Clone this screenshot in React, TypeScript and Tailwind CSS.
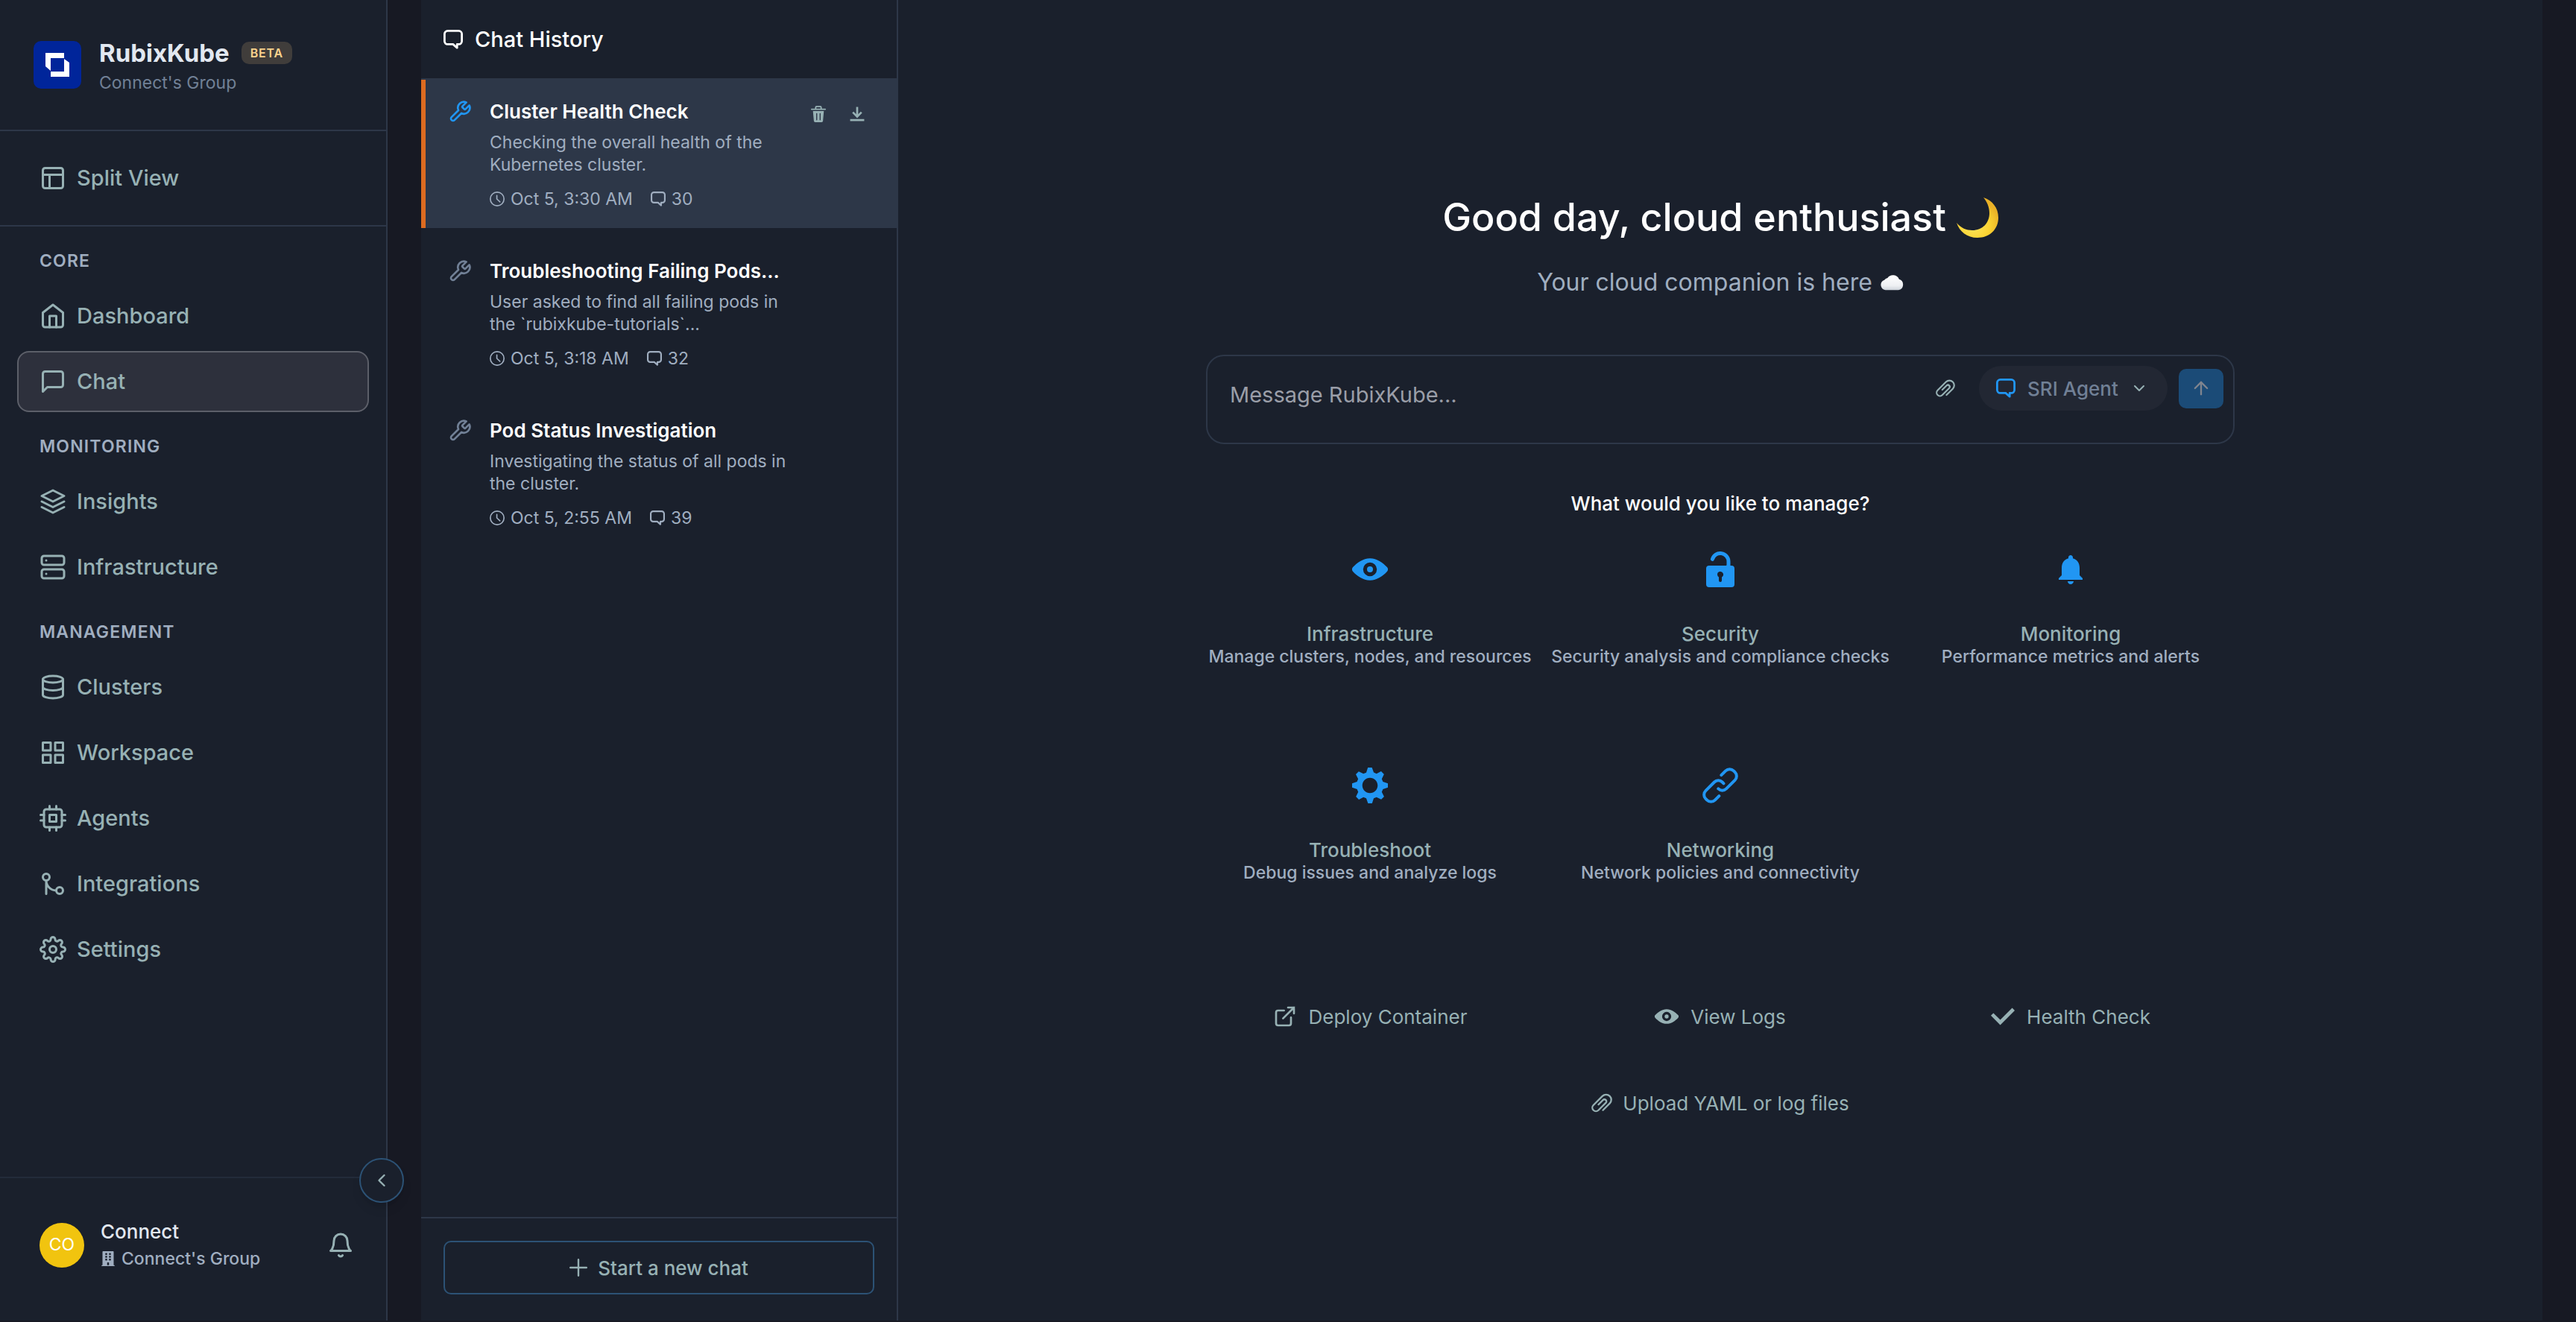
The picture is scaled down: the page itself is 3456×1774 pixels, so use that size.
import React from "react";
import {
  FiLayout,
  FiHome,
  FiMessageSquare,
  FiLayers,
  FiServer,
  FiDatabase,
  FiGrid,
  FiCpu,
  FiGitMerge,
  FiSettings,
  FiBell,
  FiTool,
  FiChevronLeft,
  FiChevronDown,
  FiArrowUp,
} from "react-icons/fi";
import { FaBuilding } from "react-icons/fa";

type IconType = React.ComponentType<{ className?: string }>;
type IconProps = { className?: string };

function fillIcon(size: number, ...paths: string[]): IconType {
  return function Glyph({ className }: IconProps) {
    return (
      <svg viewBox={`0 0 ${size} ${size}`} className={className} fill="currentColor" aria-hidden="true">
        {paths.map((d) => (
          <path key={d} d={d} fillRule="evenodd" />
        ))}
      </svg>
    );
  };
}

const ViewIcon = fillIcon(
  24,
  "M23.432,10.524C20.787,7.614,16.4,4.538,12,4.6,7.6,4.537,3.213,7.615.568,10.524a2.211,2.211,0,0,0,0,2.948C3.182,16.351,7.507,19.4,11.839,19.4h.308c4.347,0,8.671-3.049,11.288-5.929A2.21,2.21,0,0,0,23.432,10.524ZM7.4,12A4.6,4.6,0,1,1,12,16.6,4.6,4.6,0,0,1,7.4,12Z",
  "M14,12a2,2,0,1,1,-4,0a2,2,0,1,1,4,0Z",
);
const UnlockIcon = fillIcon(
  24,
  "M19.5,9.5h-.75V6.75A6.75,6.75,0,0,0,5.533,4.811a1.25,1.25,0,1,0,2.395.717A4.25,4.25,0,0,1,16.25,6.75V9a.5.5,0,0,1-.5.5H4.5a2,2,0,0,0-2,2V22a2,2,0,0,0,2,2h15a2,2,0,0,0,2-2V11.5A2,2,0,0,0,19.5,9.5Zm-9.5,6a2,2,0,1,1,3,1.723V19.5a1,1,0,0,1-2,0V17.223A1.994,1.994,0,0,1,10,15.5Z",
);
const BellSolidIcon = fillIcon(
  24,
  "M12 22c1.1 0 2-.9 2-2h-4c0 1.1.89 2 2 2zm6-6v-5c0-3.07-1.64-5.64-4.5-6.32V4c0-.83-.67-1.5-1.5-1.5s-1.5.67-1.5 1.5v.68C7.63 5.36 6 7.92 6 11v5l-2 2v1h16v-1l-2-2z",
);
const GearIcon = fillIcon(
  14,
  "M14,7.77 L14,6.17 L12.06,5.53 L11.61,4.44 L12.49,2.6 L11.36,1.47 L9.55,2.38 L8.46,1.93 L7.77,0 L6.17,0 L5.54,1.94 L4.43,2.39 L2.59,1.51 L1.46,2.64 L2.37,4.45 L1.92,5.54 L0,6.23 L0,7.82 L1.94,8.46 L2.39,9.55 L1.51,11.39 L2.64,12.52 L4.45,11.61 L5.54,12.06 L6.23,14 L7.82,14 L8.46,12.06 L9.55,11.61 L11.39,12.49 L12.52,11.36 L11.61,9.55 L12.08,8.46 L14,7.77 Z M7,10 C5.34,10 4,8.66 4,7 C4,5.34 5.34,4 7,4 C8.66,4 10,5.34 10,7 C10,8.66 8.66,10 7,10 Z",
);
const LinkIcon = fillIcon(
  24,
  "M10.458,18.374,7.721,21.11a2.853,2.853,0,0,1-3.942,0l-.892-.891a2.787,2.787,0,0,1,0-3.941l5.8-5.8a2.789,2.789,0,0,1,3.942,0l.893.892A1,1,0,0,0,14.94,9.952l-.893-.892a4.791,4.791,0,0,0-6.771,0l-5.8,5.8a4.787,4.787,0,0,0,0,6.77l.892.891a4.785,4.785,0,0,0,6.771,0l2.736-2.735a1,1,0,1,0-1.414-1.415Z",
  "M22.526,2.363l-.892-.892a4.8,4.8,0,0,0-6.77,0l-2.905,2.9a1,1,0,0,0,1.414,1.414l2.9-2.9a2.79,2.79,0,0,1,3.941,0l.893.893a2.786,2.786,0,0,1,0,3.942l-5.8,5.8a2.769,2.769,0,0,1-1.971.817h0a2.766,2.766,0,0,1-1.969-.816,1,1,0,1,0-1.415,1.412,4.751,4.751,0,0,0,3.384,1.4h0a4.752,4.752,0,0,0,3.385-1.4l5.8-5.8a4.786,4.786,0,0,0,0-6.77Z",
);
const CheckIcon = fillIcon(
  14,
  "M5.5 12L14 3.5L12.5 2L5.5 9L1.5 5L0 6.5Z",
);
const AttachmentIcon = fillIcon(
  24,
  "M21.843,3.455a6.961,6.961,0,0,0-9.846,0L1.619,13.832a5.128,5.128,0,0,0,7.252,7.252L17.3,12.653A3.293,3.293,0,1,0,12.646,8L7.457,13.184A1,1,0,1,0,8.871,14.6L14.06,9.409a1.294,1.294,0,0,1,1.829,1.83L7.457,19.67a3.128,3.128,0,0,1-4.424-4.424L13.411,4.869a4.962,4.962,0,1,1,7.018,7.018L12.646,19.67a1,1,0,1,0,1.414,1.414L21.843,13.3a6.96,6.96,0,0,0,0-9.846Z",
);
const TimeIcon = fillIcon(
  24,
  "M12,0A12,12,0,1,0,24,12,12.014,12.014,0,0,0,12,0Zm0,22A10,10,0,1,1,22,12,10.011,10.011,0,0,1,12,22Z",
  "M17.134,15.81,12.5,11.561V6.5a1,1,0,0,0-2,0V12a1,1,0,0,0,.324.738l4.959,4.545a1.01,1.01,0,0,0,1.413-.061A1,1,0,0,0,17.134,15.81Z",
);
const DeleteIcon = fillIcon(
  24,
  "M19.452 7.5H4.547a.5.5 0 00-.5.545l1.287 14.136A2 2 0 007.326 24h9.347a2 2 0 001.992-1.819L19.95 8.045a.5.5 0 00-.129-.382.5.5 0 00-.369-.163zm-9.2 13a.75.75 0 01-1.5 0v-9a.75.75 0 011.5 0zm5 0a.75.75 0 01-1.5 0v-9a.75.75 0 011.5 0zM22 4h-4.75a.25.25 0 01-.25-.25V2.5A2.5 2.5 0 0014.5 0h-5A2.5 2.5 0 007 2.5v1.25a.25.25 0 01-.25.25H2a1 1 0 000 2h20a1 1 0 000-2zM9 3.75V2.5a.5.5 0 01.5-.5h5a.5.5 0 01.5.5v1.25a.25.25 0 01-.25.25h-5.5A.25.25 0 019 3.75z",
);
const DownloadIcon = fillIcon(
  14,
  "M11.2857,6.05714 L10.08571,4.85714 L7.85714,7.14786 L7.85714,1 L6.14286,1 L6.14286,7.14786 L3.91429,4.85714 L2.71429,6.05714 L7,10.42857 L11.2857,6.05714 Z M1,11.2857 L1,13 L13,13 L13,11.2857 L1,11.2857 Z",
);

function ExternalLinkIcon({ className }: IconProps) {
  return (
    <svg viewBox="0 0 24 24" className={className} fill="none" stroke="currentColor" strokeWidth="2" strokeLinecap="round" aria-hidden="true">
      <path d="M18 13v6a2 2 0 0 1-2 2H5a2 2 0 0 1-2-2V8a2 2 0 0 1 2-2h6M15 3h6v6M10 14L21 3" />
    </svg>
  );
}

function ChatIcon({ className }: IconProps) {
  return (
    <svg viewBox="0 0 26 26" className={className} fill="none" stroke="currentColor" strokeWidth="2.8" strokeLinejoin="round" aria-hidden="true">
      <path d="M5.6 1.4h14.8a4.2 4.2 0 0 1 4.2 4.2v9.6a4.2 4.2 0 0 1-4.2 4.2h-2.2v4.8l-5.4-4.8H5.6a4.2 4.2 0 0 1-4.2-4.2V5.6a4.2 4.2 0 0 1 4.2-4.2Z" />
    </svg>
  );
}

function PlusIcon({ className }: IconProps) {
  return (
    <svg viewBox="0 0 24 24" className={className} fill="none" stroke="currentColor" strokeWidth="2.4" strokeLinecap="round" aria-hidden="true">
      <path d="M12 1.2v21.6M1.2 12h21.6" />
    </svg>
  );
}

function Logo() {
  return (
    <svg viewBox="0 0 64 64" className="size-16 shrink-0" role="img" aria-label="RubixKube logo">
      <rect width="64" height="64" rx="10" fill="#00259a" />
      <path fill="#fff" d="M16 16H41V23H23V40L16 34Z" />
      <path fill="#fff" d="M41 24L48 29V48H23V41H41Z" />
    </svg>
  );
}

function Moon() {
  return (
    <svg viewBox="0 0 56 56" className="size-14 shrink-0" role="img" aria-label="crescent moon">
      <defs>
        <radialGradient id="moonFill" cx="40%" cy="70%" r="65%">
          <stop offset="0" stopColor="#ffe65c" />
          <stop offset="0.6" stopColor="#fbd332" />
          <stop offset="1" stopColor="#eab127" />
        </radialGradient>
      </defs>
      <path d="M36 1C48 5 56 15 56 28C56 44 44 55 28 55C14 55 4 47 0 35C6 42 13 45 21 45C35 45 44 35 44 22C44 14 41 7 36 1Z" fill="url(#moonFill)" />
    </svg>
  );
}

function Cloud() {
  return (
    <svg viewBox="0 0 34 24" className="h-6 w-8 shrink-0" role="img" aria-label="cloud">
      <defs>
        <linearGradient id="cloudFill" x1="0" y1="0" x2="0" y2="1">
          <stop offset="0" stopColor="#ffffff" />
          <stop offset="0.7" stopColor="#eef0f3" />
          <stop offset="1" stopColor="#cdd3da" />
        </linearGradient>
      </defs>
      <path d="M8 23A7.500 7.500 0 0 1 6.500 8.500A7 7 0 0 1 11 5.500A9.500 9.500 0 0 1 27.500 7.500A8 8 0 0 1 26.500 23Z" fill="url(#cloudFill)" />
    </svg>
  );
}

const sections: { label: string; items: { label: string; icon: IconType; active?: boolean }[] }[] = [
  {
    label: "CORE",
    items: [
      { label: "Dashboard", icon: FiHome },
      { label: "Chat", icon: FiMessageSquare, active: true },
    ],
  },
  {
    label: "MONITORING",
    items: [
      { label: "Insights", icon: FiLayers },
      { label: "Infrastructure", icon: FiServer },
    ],
  },
  {
    label: "MANAGEMENT",
    items: [
      { label: "Clusters", icon: FiDatabase },
      { label: "Workspace", icon: FiGrid },
      { label: "Agents", icon: FiCpu },
      { label: "Integrations", icon: FiGitMerge },
      { label: "Settings", icon: FiSettings },
    ],
  },
];

const chats = [
  {
    title: "Cluster Health Check",
    lines: ["Checking the overall health of the", "Kubernetes cluster."],
    time: "Oct 5, 3:30 AM",
    count: 30,
    active: true,
  },
  {
    title: "Troubleshooting Failing Pods...",
    lines: ["User asked to find all failing pods in", "the `rubixkube-tutorials`..."],
    time: "Oct 5, 3:18 AM",
    count: 32,
    active: false,
  },
  {
    title: "Pod Status Investigation",
    lines: ["Investigating the status of all pods in", "the cluster."],
    time: "Oct 5, 2:55 AM",
    count: 39,
    active: false,
  },
];

const topics = [
  { label: "Infrastructure", detail: "Manage clusters, nodes, and resources", icon: ViewIcon },
  { label: "Security", detail: "Security analysis and compliance checks", icon: UnlockIcon },
  { label: "Monitoring", detail: "Performance metrics and alerts", icon: BellSolidIcon },
  { label: "Troubleshoot", detail: "Debug issues and analyze logs", icon: GearIcon },
  { label: "Networking", detail: "Network policies and connectivity", icon: LinkIcon },
];

const actions = [
  { label: "Deploy Container", icon: ExternalLinkIcon },
  { label: "View Logs", icon: ViewIcon },
  { label: "Health Check", icon: CheckIcon },
];

function NavItem({ label, icon: Icon, active = false }: { label: string; icon: IconType; active?: boolean }) {
  return (
    <a
      href="#"
      aria-current={active ? "page" : undefined}
      className={
        active
          ? "flex h-[82px] items-center gap-3.5 rounded-2xl border-2 border-[#5c5f69] bg-[#2d303c] px-7"
          : "flex h-[82px] items-center gap-3.5 rounded-2xl border-2 border-transparent px-7"
      }
    >
      <Icon className="size-9" />
      <span className="text-[29px] leading-10 font-medium">{label}</span>
    </a>
  );
}

function Sidebar() {
  return (
    <aside className="relative flex w-[520px] shrink-0 flex-col border-r-2 border-[#2d3748] bg-[#1a202c] text-[#97b1b4]">
      <div className="flex h-[176px] items-center gap-6 border-b-2 border-[#2d3748] px-[45px]">
        <Logo />
        <div className="pt-2">
          <div className="flex items-center gap-4">
            <span className="text-[33px] leading-10 font-bold text-[#e2e8f0]">RubixKube</span>
            <span className="rounded-[10px] bg-[#403d3b] px-3 text-base leading-[30px] font-semibold tracking-wider text-[#fbd38d]">
              BETA
            </span>
          </div>
          <p className="text-[23px] leading-10 text-[#718096]">Connect's Group</p>
        </div>
      </div>
      <div className="flex h-32 flex-col justify-center border-b-2 border-[#2d3748] px-[23px]">
        <NavItem label="Split View" icon={FiLayout} />
      </div>
      <nav className="flex-1 px-[23px]" aria-label="Main">
        {sections.map((section) => (
          <div key={section.label}>
            <h2 className="px-[30px] pt-[31px] pb-[18px] text-[23px] leading-[30px] font-semibold tracking-wider text-[#a0aec0]">
              {section.label}
            </h2>
            <div className="flex flex-col gap-1.5">
              {section.items.map((item) => (
                <NavItem key={item.label} {...item} />
              ))}
            </div>
          </div>
        ))}
      </nav>
      <div className="flex h-[193px] items-center gap-[22px] border-t-2 border-[#232b3a] px-[43px] pb-3">
        <span className="ml-2.5 flex size-[60px] shrink-0 items-center justify-center rounded-full bg-[#f1c40f] text-[23px] text-white">
          CO
        </span>
        <div className="flex-1">
          <p className="text-[26px] leading-9 font-medium text-[#e2e8f0]">Connect</p>
          <p className="flex items-center gap-2 text-[23px] leading-9 font-medium text-[#a0aec0]">
            <FaBuilding className="size-5" />
            Connect's Group
          </p>
        </div>
        <button type="button" aria-label="Notifications">
          <FiBell className="size-9" />
        </button>
      </div>
      <button
        type="button"
        aria-label="Collapse sidebar"
        className="absolute -right-6 bottom-[158px] flex size-[60px] items-center justify-center rounded-full border-2 border-[#2c5275] bg-[#1a202c] shadow-lg"
      >
        <FiChevronLeft className="size-7" />
      </button>
    </aside>
  );
}

function ChatHistory() {
  return (
    <section className="flex w-[640px] shrink-0 flex-col border-r-2 border-[#2d3748]" aria-label="Chat History">
      <header className="flex h-[107px] items-center gap-4 border-b-2 border-[#2d3748] px-[30px] text-white">
        <ChatIcon className="size-[26px]" />
        <h1 className="text-[29px] leading-10 font-medium">Chat History</h1>
      </header>
      <ul className="flex flex-1 flex-col gap-[15px]">
        {chats.map((chat) => (
          <li
            key={chat.title}
            className={
              chat.active
                ? "flex gap-6 border-l-[6px] border-[#dd6b20] bg-[#2d3748] pt-[25px] pr-[42px] pb-[23px] pl-[30px]"
                : "flex gap-6 border-l-[6px] border-transparent pt-[25px] pr-[42px] pb-[23px] pl-[30px]"
            }
          >
            <FiTool className={chat.active ? "mt-0.5 size-8 text-[#2196f3]" : "mt-0.5 size-8 text-[#718096]"} />
            <div className="flex-1">
              <h2 className="text-[26px] leading-9 font-semibold text-white">{chat.title}</h2>
              <p className="pt-2 text-[23px] leading-[30px] text-[#a0aec0]">
                {chat.lines.map((line) => (
                  <span key={line} className="block whitespace-nowrap">
                    {line}
                  </span>
                ))}
              </p>
              <div className="flex items-center gap-6 pt-[15px] text-[23px] leading-8 text-[#a0aec0]">
                <span className="flex items-center gap-2">
                  <TimeIcon className="size-5" />
                  {chat.time}
                </span>
                <span className="flex items-center gap-2">
                  <ChatIcon className="size-5" />
                  {chat.count}
                </span>
              </div>
            </div>
            {chat.active && (
              <div className="flex items-start gap-[30px] pt-2.5 text-[#97b1b4]">
                <button type="button" aria-label="Delete chat">
                  <DeleteIcon className="size-[22px]" />
                </button>
                <button type="button" aria-label="Download chat">
                  <DownloadIcon className="size-[22px]" />
                </button>
              </div>
            )}
          </li>
        ))}
      </ul>
      <footer className="h-[139px] border-t-2 border-[#2d3748] px-[30px] pt-[30px]">
        <button
          type="button"
          className="flex h-[72px] w-full items-center justify-center gap-3.5 rounded-[10px] border-2 border-[#2c5275] text-[26px] font-medium text-[#97b1b4]"
        >
          <PlusIcon className="size-6" />
          Start a new chat
        </button>
      </footer>
    </section>
  );
}

function Composer() {
  return (
    <form className="flex h-[120px] w-full rounded-3xl border-2 border-[#2d3748] py-[13px] pr-[13px] pl-[30px]">
      <textarea
        aria-label="Message"
        placeholder="Message RubixKube..."
        className="h-full flex-1 resize-none bg-transparent pt-[18px] text-[29px] leading-[42px] outline-none placeholder:text-[#9a9ea8]"
      />
      <div className="flex h-[60px] items-center text-[#97b1b4]">
        <button type="button" aria-label="Attach file" className="mr-8">
          <AttachmentIcon className="size-[26px]" />
        </button>
        <label className="mr-[15px] flex h-[60px] items-center gap-4 rounded-full bg-[#222733] pr-[26px] pl-[23px]">
          <ChatIcon className="size-[26px] text-[#2196f3]" />
          <select aria-label="Agent" className="appearance-none bg-transparent text-[26px] font-medium text-[#718096]">
            <option>SRI Agent</option>
          </select>
          <FiChevronDown className="size-6" />
        </label>
        <button
          type="submit"
          aria-label="Send"
          className="flex h-[53px] w-[60px] items-center justify-center rounded-[10px] bg-[#1b4b77] text-[#80858f]"
        >
          <FiArrowUp className="size-7" />
        </button>
      </div>
    </form>
  );
}

function Welcome() {
  return (
    <main className="flex min-w-0 flex-1 flex-col items-center px-8 pt-[260px]">
      <div className="flex w-full max-w-[1380px] flex-col items-center">
        <h2 className="flex items-center gap-3.5 text-[52px] leading-[64px] font-medium text-white">
          Good day, cloud enthusiast
          <Moon />
        </h2>
        <p className="flex items-center gap-2.5 pt-[31px] text-[32px] leading-[48px] text-[#a0aec0]">
          Your cloud companion is here
          <Cloud />
        </p>
        <div className="w-full pt-[73px]">
          <Composer />
        </div>
        <h3 className="pt-[60px] text-[26px] leading-10 font-medium text-white">What would you like to manage?</h3>
        <div className="grid w-full grid-cols-3 gap-[30px] pt-4">
          {topics.map(({ label, detail, icon: Icon }) => (
            <button
              key={label}
              type="button"
              className="flex h-[260px] min-w-0 flex-col items-center pt-7 leading-[30px] whitespace-nowrap"
            >
              <Icon className="size-12 text-[#2196f3]" />
              <span className="pt-12 text-[26px] font-medium text-[#97b1b4]">{label}</span>
              <span className="text-[23px] font-medium text-[#a0aec0]">{detail}</span>
            </button>
          ))}
        </div>
        <div className="grid w-full grid-cols-3 gap-[30px] pt-[62px] text-[26px] text-[#97b1b4]">
          {actions.map(({ label, icon: Icon }) => (
            <button key={label} type="button" className="flex h-20 items-center justify-center gap-4">
              <Icon className="size-8" />
              {label}
            </button>
          ))}
        </div>
        <button type="button" className="mt-9 flex h-20 items-center gap-3.5 text-[26px] text-[#97b1b4]">
          <AttachmentIcon className="size-7" />
          Upload YAML or log files
        </button>
      </div>
    </main>
  );
}

export default function App() {
  return (
    <div className="flex min-h-screen bg-[#171923] pb-0.5 font-['Inter',sans-serif] antialiased">
      <Sidebar />
      <div className="mx-[45px] flex min-w-0 flex-1 bg-[#1a202c]">
        <ChatHistory />
        <Welcome />
      </div>
    </div>
  );
}
